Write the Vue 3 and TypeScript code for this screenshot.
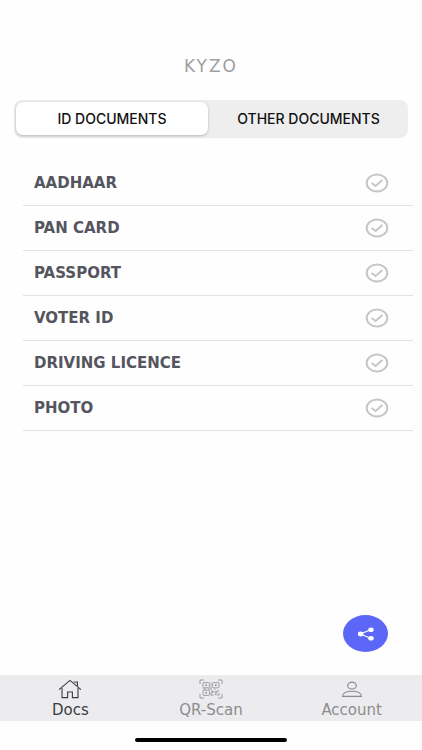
<script setup lang="ts">
import { ref } from 'vue'

const tabs = ['ID DOCUMENTS', 'OTHER DOCUMENTS']
const activeTab = ref(0)
const documents = ['AADHAAR', 'PAN CARD', 'PASSPORT', 'VOTER ID', 'DRIVING LICENCE', 'PHOTO']
</script>

<template>
  <div class="screen">
    <header class="brand"><h1>KYZO</h1></header>

    <div class="tabs" role="tablist">
      <button
        v-for="(tab, i) in tabs"
        :key="tab"
        type="button"
        role="tab"
        class="tab"
        :class="{ active: activeTab === i }"
        :aria-selected="activeTab === i"
        @click="activeTab = i"
      >{{ tab }}</button>
    </div>

    <main class="content">
      <ul class="documents">
        <li v-for="name in documents" :key="name">
          <button type="button" class="document">
            <span>{{ name }}</span>
            <svg class="check" viewBox="0 0 24 20" aria-hidden="true">
              <ellipse cx="12" cy="10" rx="10.3" ry="8.5" />
              <path d="M6.6 10 L10.6 13 L17.4 7" />
            </svg>
          </button>
        </li>
      </ul>

      <button type="button" class="share" aria-label="Share">
        <svg viewBox="0 0 18 14" aria-hidden="true">
          <path d="M14 2.5 L3.5 7 L14 11.5" fill="none" stroke="#fff" stroke-width="1.2" />
          <ellipse cx="3.6" cy="7" rx="2.7" ry="2.4" />
          <ellipse cx="14" cy="2.7" rx="2.7" ry="2.3" />
          <ellipse cx="14" cy="11.3" rx="2.7" ry="2.3" />
        </svg>
      </button>
    </main>

    <nav class="bottom-nav">
      <a href="#docs" class="current">
        <svg viewBox="0 0 24 20" aria-hidden="true">
          <path d="M1 10.6 L12 1.4 L23 10.6" />
          <path d="M4 9 V18.6 H9.6 V13 H14.4 V18.6 H20 V9" />
          <path d="M15.6 3 H19.4 V7.2" />
        </svg>
        <span>Docs</span>
      </a>
      <a href="#scan">
        <svg viewBox="0 0 24 20" class="qr" aria-hidden="true">
          <path d="M1 5 V1 H5 M19 1 H23 V5 M23 15 V19 H19 M5 19 H1 V15" />
          <rect x="4" y="3.6" width="6.4" height="5.2" rx="1" />
          <rect x="13.6" y="3.6" width="6.4" height="5.2" rx="1" />
          <rect x="4" y="11.2" width="6.4" height="5.2" rx="1" />
          <path d="M6.4 6.2 H8 M16 6.2 H17.6 M6.4 13.8 H8" stroke-width="1.5" />
          <path d="M11.3 4 H12.7 M11.3 6.2 H12.7 M11.3 8.4 H12.7 M4 10 H7 M9 10 H13 M15 10 H16.5 M12 12 H14 V13.8 H12 V16.2 H14.4 M16 11.8 V13.6 H18 V11.8 H20 M16 16.2 V15.2 H18 M20 14 V16.2 H18.4" />
        </svg>
        <span>QR-Scan</span>
      </a>
      <a href="#account">
        <svg viewBox="0 0 24 20" aria-hidden="true">
          <ellipse cx="12" cy="6.6" rx="4.3" ry="3.5" />
          <path d="M2.6 17.4 C2.6 14 6 12.2 12 12.2 S21.4 14 21.4 17.4 Z" />
        </svg>
        <span>Account</span>
      </a>
    </nav>
    <footer class="home-bar"><div></div></footer>
  </div>
</template>

<style>
body {
  margin: 0;
  background: #fefefe;
}
</style>

<style scoped>
.screen {
  display: flex;
  flex-direction: column;
  min-height: 100vh;
  font-family: Inter, "Liberation Sans", sans-serif;
}
button {
  border: 0;
  padding: 0;
  font: inherit;
  background: none;
  cursor: pointer;
}
.brand {
  padding: 56px 0 24px;
  text-align: center;
}
h1 {
  margin: 0;
  color: #9f9f9f;
  font: 400 17px/20px "DejaVu Sans", sans-serif;
  letter-spacing: 2px;
}
.tabs {
  display: grid;
  grid-template-columns: 1fr 1fr;
  margin: 0 14px;
  padding: 2px 2px 3px;
  border-radius: 8px;
  background: #eeeeef;
}
.tab {
  height: 33px;
  border-radius: 7px;
  color: #111;
  font-size: 14px;
  font-weight: 500;
}
.tab.active {
  margin-right: 3px;
  background: #fff;
  box-shadow: 0 1px 3px rgba(0, 0, 0, 0.24);
}
.content {
  display: flex;
  flex: 1;
  flex-direction: column;
  padding-top: 22px;
}
.documents {
  margin: 0 9px 0 23px;
  padding: 0;
  list-style: none;
}
.documents li {
  border-bottom: 1px solid #e2e2e3;
}
.document {
  display: flex;
  align-items: center;
  justify-content: space-between;
  width: 100%;
  height: 44px;
  padding: 0 24px 0 11px;
  color: #55555f;
  font: 700 15px/20px "DejaVu Sans", sans-serif;
}
.documents li:first-child .document {
  height: 45px;
}
.check {
  width: 24px;
  height: 20px;
  fill: none;
  stroke: #c6c6c7;
  stroke-width: 2;
}
.share {
  display: flex;
  align-items: center;
  justify-content: center;
  width: 45px;
  height: 37px;
  margin: auto 34px 23px auto;
  border-radius: 50%;
  background: #5c67f7;
}
.share svg {
  width: 18px;
  height: 14px;
  fill: #fff;
}
.bottom-nav {
  display: grid;
  grid-template-columns: repeat(3, 1fr);
  background: #ececee;
}
.bottom-nav a {
  display: flex;
  flex-direction: column;
  align-items: center;
  gap: 1px;
  padding: 4px 0 1px;
  color: #8c8c8e;
  font: 400 15px/20px "DejaVu Sans", sans-serif;
  text-decoration: none;
}
.bottom-nav a.current {
  color: #3c3c3e;
}
.bottom-nav svg {
  width: 24px;
  height: 20px;
  fill: none;
  stroke: currentColor;
  stroke-width: 1.1;
}
.bottom-nav .qr {
  stroke-width: 0.8;
}
.home-bar {
  display: flex;
  justify-content: center;
  padding: 17px 0 8px;
}
.home-bar div {
  width: 36%;
  height: 4px;
  border-radius: 2px;
  background: #000;
}
</style>
